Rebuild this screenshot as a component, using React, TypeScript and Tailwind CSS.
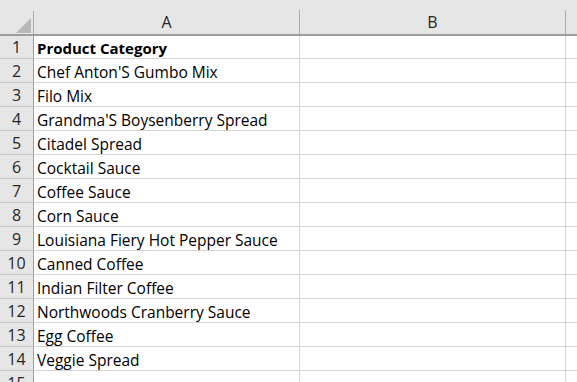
import React from "react";

const ROWS = [
  "Product Category",
  "Chef Anton'S Gumbo Mix",
  "Filo Mix",
  "Grandma'S Boysenberry Spread",
  "Citadel Spread",
  "Cocktail Sauce",
  "Coffee Sauce",
  "Corn Sauce",
  "Louisiana Fiery Hot Pepper Sauce",
  "Canned Coffee",
  "Indian Filter Coffee",
  "Northwoods Cranberry Sauce",
  "Egg Coffee",
  "Veggie Spread",
  "",
];

function HeaderCell({ label, width }: { label?: string; width: string }) {
  return (
    <div className={`${width} shrink-0 flex flex-col`}>
      <div className="h-[11px]" />
      <div className="flex-1 border-r border-[#ababab] flex items-center justify-center text-[16px] text-[#262626]">
        {label}
      </div>
    </div>
  );
}

export default function App() {
  return (
    <div className="w-[577px] h-[382px] overflow-hidden bg-white font-['Open_Sans',sans-serif]">
      {/* column header strip */}
      <div className="flex h-[36px] bg-[#e6e6e6] border-b-2 border-[#9e9e9e]">
        <div className="w-[34px] shrink-0 flex flex-col">
          <div className="h-[11px]" />
          <div className="flex-1 border-r border-[#ababab] flex items-end justify-end pr-[2px] pb-[1px]">
            <svg width="15" height="15" viewBox="0 0 15 15">
              <polygon points="15,0 15,15 0,15" fill="#b8b8b8" />
            </svg>
          </div>
        </div>
        <HeaderCell label="A" width="w-[266px]" />
        <HeaderCell label="B" width="w-[266px]" />
        <div className="flex-1" />
      </div>

      {ROWS.map((text, i) => (
        <div key={i} className={`flex ${i === 0 ? "h-[23px]" : "h-[24px]"}`}>
          <div className="w-[34px] shrink-0 bg-[#e6e6e6] border-r border-b border-r-[#9e9e9e] border-b-[#c8c8c8] flex items-end justify-center text-[16px] leading-[21px] text-[#262626]">
            {i + 1}
          </div>
          <div
            className={`w-[266px] shrink-0 border-r border-b border-[#d4d4d4] flex items-end pl-[3px] leading-[20px] text-black whitespace-nowrap ${
              i === 0 ? "font-bold text-[15px]" : "text-[15.5px]"
            }`}
          >
            {text}
          </div>
          <div className="w-[266px] shrink-0 border-r border-b border-[#d4d4d4]" />
          <div className="flex-1 border-b border-[#d4d4d4]" />
        </div>
      ))}
    </div>
  );
}
